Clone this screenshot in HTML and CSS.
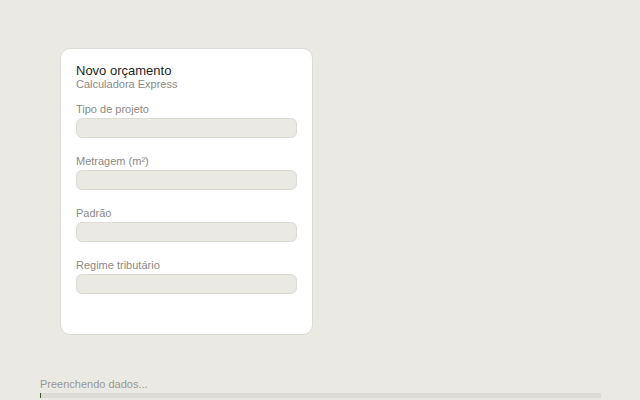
FILE: index.html
```html
<!DOCTYPE html>
<html lang="pt-BR">
<head>
  <meta charset="UTF-8">
  <title>Novo orçamento</title>
  <link rel="stylesheet" href="styles.css">
</head>
<body>
  <main class="page">
    <div class="card">
      <div class="card-head">
        <div class="title">Novo orçamento</div>
        <div class="subtitle">Calculadora Express</div>
      </div>
      <div class="field">
        <label>Tipo de projeto</label>
        <div class="input"></div>
      </div>
      <div class="field">
        <label>Metragem (m²)</label>
        <div class="input"></div>
      </div>
      <div class="field">
        <label>Padrão</label>
        <div class="input"></div>
      </div>
      <div class="field">
        <label>Regime tributário</label>
        <div class="input"></div>
      </div>
    </div>
  </main>

  <footer class="progress">
    <div class="progress-text">Preenchendo dados...</div>
    <div class="progress-bar">
      <div class="progress-fill" style="width: 1px"></div>
    </div>
  </footer>
</body>
</html>
```

FILE: styles.css
```css
html, body {
  margin: 0;
  padding: 0;
}

body {
  background: #ebe9e4;
  font-family: "Liberation Sans", Arial, sans-serif;
  color: #222;
  overflow: hidden;
}

.page {
  padding: 48px 0 0 60px;
}

.card {
  box-sizing: border-box;
  width: 253px;
  padding: 14px 15px 40px 15px;
  background: #fff;
  border: 1px solid #dcdad4;
  border-radius: 10px;
  display: flex;
  flex-direction: column;
  gap: 12px;
}

.card-head {
  display: flex;
  flex-direction: column;
}

.title {
  font-size: 13px;
  line-height: 15px;
  color: #1f1f1f;
}

.subtitle {
  font-size: 11px;
  line-height: 13px;
  color: #8b8a86;
}

.field {
  display: flex;
  flex-direction: column;
  gap: 2px;
  margin-bottom: 5px;
}

.field:last-child {
  margin-bottom: 0;
}

.field label {
  font-size: 11px;
  line-height: 13px;
  color: #8b8a86;
}

.input {
  box-sizing: border-box;
  height: 20px;
  background: #ebe9e4;
  border: 1px solid #dddbd5;
  border-radius: 6px;
}

.progress {
  margin: 43px 39px 0 40px;
}

.progress-text {
  font-size: 11px;
  line-height: 13px;
  color: #9a9994;
}

.progress-bar {
  margin-top: 2px;
  height: 5px;
  background: #dcdbd6;
}

.progress-fill {
  height: 100%;
  background: #3f5a24;
}
```
